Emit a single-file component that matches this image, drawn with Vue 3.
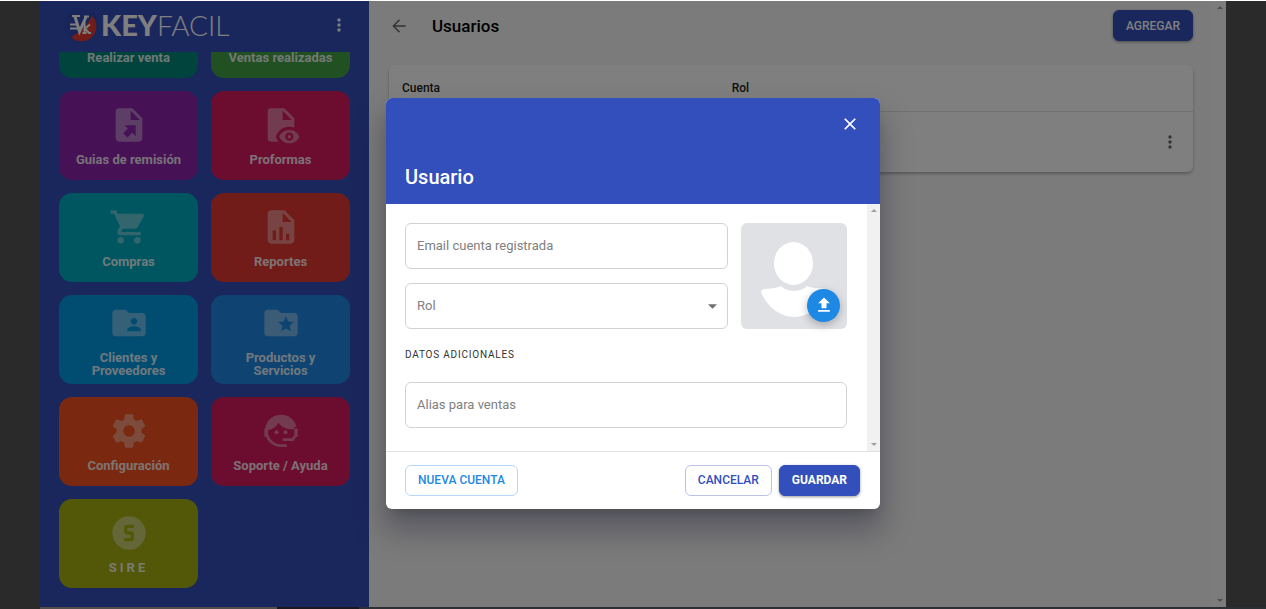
<script setup>
import { ref } from 'vue'

const tiles = [
  { label: 'Realizar venta', tone: 'teal', icon: '' },
  { label: 'Ventas realizadas', tone: 'green', icon: '' },
  { label: 'Guias de remisión', tone: 'purple', icon: 'M14 2H6c-1.1 0-2 .9-2 2v16c0 1.1.9 2 2 2h12c1.1 0 2-.9 2-2V8l-6-6zM13 3.500 18.500 9H13V3.500zM9.300 12.100H16v6.700l-2.100-2.100-2.800 2.800-2.600-2.600 2.800-2.800z' },
  { label: 'Proformas', tone: 'pink', icon: 'M17 18c.56 0 1 .44 1 1s-.44 1-1 1-1-.44-1-1 .44-1 1-1m0-3c-2.730 0-5.060 1.660-6 4 .94 2.340 3.270 4 6 4s5.060-1.660 6-4c-.94-2.340-3.270-4-6-4m0 6.500a2.500 2.500 0 0 1-2.500-2.500 2.500 2.500 0 0 1 2.500-2.500 2.500 2.500 0 0 1 2.500 2.500 2.500 2.500 0 0 1-2.500 2.500M9.270 20c-.13-.320-.250-.660-.350-1 .1-.340.220-.680.350-1 1.180-2.970 4.270-5 7.730-5 1.060 0 2.070.180 3 .500V8l-6-6H6a2 2 0 0 0-2 2v16a2 2 0 0 0 2 2h4.500a8.150 8.150 0 0 1-1.230-2M13 3.500 18.500 9H13V3.500z' },
  { label: 'Compras', tone: 'cyan', icon: 'M17 18a2 2 0 0 1 2 2 2 2 0 0 1-2 2 2 2 0 0 1-2-2c0-1.110.890-2 2-2M1 2h3.270l.94 2H20a1 1 0 0 1 1 1c0 .170-.050.340-.120.500l-3.580 6.470c-.340.610-1 1.030-1.750 1.030H8.100l-.9 1.630-.030.120a.25.25 0 0 0 .25.250H19v2H7a2 2 0 0 1-2-2c0-.350.090-.680.240-.960l1.360-2.450L3 4H1V2m6 16a2 2 0 0 1 2 2 2 2 0 0 1-2 2 2 2 0 0 1-2-2c0-1.110.890-2 2-2z' },
  { label: 'Reportes', tone: 'red', icon: 'M14 2H6c-1.1 0-2 .9-2 2v16c0 1.1.9 2 2 2h12c1.1 0 2-.9 2-2V8l-6-6zM13 3.500 18.500 9H13zM7 14h2v6H7zM11 12h2v8h-2zM15 16h2v4h-2z' },
  { label: 'Clientes y Proveedores', tone: 'sky', icon: 'M20 6h-8l-2-2H4c-1.1 0-2 .9-2 2v12c0 1.1.9 2 2 2h16c1.1 0 2-.9 2-2V8c0-1.1-.9-2-2-2zm-5 3c1.1 0 2 .9 2 2s-.9 2-2 2-2-.9-2-2 .9-2 2-2zm4 8h-8v-1c0-1.330 2.670-2 4-2s4 .67 4 2v1z' },
  { label: 'Productos y Servicios', tone: 'blue', icon: 'M20 6h-8l-2-2H4c-1.1 0-2 .9-2 2v12c0 1.1.9 2 2 2h16c1.1 0 2-.9 2-2V8c0-1.1-.9-2-2-2zm-2.060 11L15 15.280 12.060 17l.78-3.330-2.590-2.240 3.410-.290L15 8l1.340 3.140 3.410.290-2.590 2.240.78 3.330z' },
  { label: 'Configuración', tone: 'orange', icon: 'M12 15.500A3.500 3.500 0 0 1 8.500 12 3.500 3.500 0 0 1 12 8.500a3.500 3.500 0 0 1 3.500 3.500 3.500 3.500 0 0 1-3.500 3.500m7.430-2.530c.040-.320.070-.640.070-.970s-.030-.660-.070-1l2.110-1.630c.190-.150.240-.420.120-.640l-2-3.460c-.120-.220-.390-.310-.610-.220l-2.490 1c-.520-.390-1.060-.730-1.690-.980l-.370-2.650A.506.506 0 0 0 14 2h-4c-.250 0-.460.180-.500.420l-.370 2.650c-.630.250-1.170.590-1.690.980l-2.490-1c-.220-.090-.490 0-.610.220l-2 3.460c-.130.220-.070.490.120.640L4.570 11c-.040.340-.070.670-.070 1s.030.650.070.970l-2.110 1.660c-.190.150-.250.420-.120.640l2 3.460c.120.220.390.300.610.220l2.490-1.010c.520.400 1.060.740 1.690.990l.370 2.650c.040.240.250.420.500.420h4c.250 0 .460-.180.500-.420l.370-2.650c.630-.260 1.170-.590 1.690-.990l2.490 1.010c.220.080.490 0 .610-.220l2-3.460c.120-.220.070-.490-.120-.640z' },
  { label: 'Soporte / Ayuda', tone: 'pink', face: true },
  { label: 'SIRE', tone: 'olive', spaced: true, icon: 'M12 2a10 10 0 1 0 0 20 10 10 0 0 0 0-20zM11 7a2 2 0 0 0-2 2v2a2 2 0 0 0 2 2h2v2H9v2h4a2 2 0 0 0 2-2v-2a2 2 0 0 0-2-2h-2V9h4V7h-4z' },
]

const email = ref('')
const role = ref('')
const alias = ref('')
</script>

<template>
  <div class="page">
    <div class="shell">
      <aside class="sidebar">
        <header class="brand">
          <svg class="emblem" viewBox="0 0 36 36" aria-hidden="true">
            <circle cx="17" cy="18" r="17" fill="#314bb2" />
            <path d="M28 9A14.500 14.500 0 0 1 7 30C16 25 24 18 28 9Z" fill="#e53a2e" />
            <g fill="none" stroke="#fff">
              <path d="M8 9h8M20 9.500h5M6 17.500h7M6 21.500h8" stroke-width="2" />
              <path d="M11 9.500l4.500 15L22 10" stroke-width="3" />
              <path d="M20.500 15v11M18.500 26h4M26 17.500l-5 4 4 4.500h2" stroke-width="2" />
            </g>
          </svg>
          <h1 class="wordmark"><b>KEY</b><span>FACIL</span></h1>
          <button class="icon-btn light" type="button" aria-label="Menú">
            <svg viewBox="0 0 24 24"><path d="M12 16a2 2 0 1 1 0 4 2 2 0 0 1 0-4m0-6a2 2 0 1 1 0 4 2 2 0 0 1 0-4m0-6a2 2 0 1 1 0 4 2 2 0 0 1 0-4z" /></svg>
          </button>
        </header>
        <nav class="tiles">
          <a v-for="t in tiles" :key="t.label" href="#" class="tile" :class="[t.tone, { spaced: t.spaced }]">
            <svg v-if="t.face" class="tile-icon" viewBox="0 0 24 24" aria-hidden="true">
              <path d="M20.500 9.500A8.800 8.800 0 0 0 3.500 9.500V14A8.800 8.800 0 0 0 12 20.800h3.500" fill="none" stroke="currentColor" stroke-width="1.600" />
              <path d="M4 11.500C4 6 8 3.600 12 3.600S20 6 20 11c-4 .2-7.500-1-9.500-4-1.300 2.500-3.500 4-6.500 4.500zM2 10.500h2v5H2zM20 10.500h2v5h-2zM20 14.500h1.600L19.500 18H13v-1.600h5.500z" />
              <circle cx="9.300" cy="12.700" r="1.200" /><circle cx="14.700" cy="12.700" r="1.200" />
            </svg>
            <svg v-else class="tile-icon" viewBox="0 0 24 24" aria-hidden="true"><path fill-rule="evenodd" :d="t.icon" /></svg>
            <span>{{ t.label }}</span>
          </a>
        </nav>
      </aside>

      <main class="main">
        <div class="content">
          <header class="topbar">
            <button class="icon-btn" type="button" aria-label="Volver">
              <svg viewBox="0 0 24 24"><path d="M20 11.200v1.600H7.200l5.900 5.900L12 20l-8-8 8-8 1.100 1.300-5.900 5.900z" /></svg>
            </button>
            <h2>Usuarios</h2>
            <button class="btn filled" type="button">AGREGAR</button>
          </header>
          <table class="users">
            <thead>
              <tr><th class="account">Cuenta</th><th>Rol</th><th class="actions"></th></tr>
            </thead>
            <tbody>
              <tr>
                <td></td><td></td>
                <td class="actions">
                  <button class="icon-btn" type="button" aria-label="Opciones">
                    <svg viewBox="0 0 24 24"><path d="M12 16a2 2 0 1 1 0 4 2 2 0 0 1 0-4m0-6a2 2 0 1 1 0 4 2 2 0 0 1 0-4m0-6a2 2 0 1 1 0 4 2 2 0 0 1 0-4z" /></svg>
                  </button>
                </td>
              </tr>
            </tbody>
          </table>
        </div>
        <div class="rail" aria-hidden="true"><i class="up"></i><i class="down"></i></div>
      </main>
    </div>
    <div class="strip"><i></i><i></i><i></i></div>

    <div class="overlay">
      <form class="dialog" role="dialog" aria-labelledby="dialog-title" @submit.prevent>
        <header class="dialog-head">
          <button class="close" type="button" aria-label="Cerrar">
            <svg viewBox="0 0 24 24"><path d="M19 6.410 17.590 5 12 10.590 6.410 5 5 6.410 10.590 12 5 17.590 6.410 19 12 13.410 17.590 19 19 17.590 13.410 12z" /></svg>
          </button>
          <h2 id="dialog-title">Usuario</h2>
        </header>
        <div class="dialog-body">
          <div class="fields">
            <div class="account-row">
              <div class="stack">
                <input v-model="email" class="control" type="email" placeholder="Email cuenta registrada" aria-label="Email cuenta registrada">
                <div class="select-wrap">
                  <select v-model="role" class="control" aria-label="Rol">
                    <option value="">Rol</option>
                  </select>
                  <svg class="caret" viewBox="0 0 10 5" aria-hidden="true"><path d="M0 0h10L5 5z" /></svg>
                </div>
              </div>
              <div class="avatar">
                <svg class="person" viewBox="0 0 106 106" aria-hidden="true">
                  <ellipse cx="52.500" cy="40.500" rx="19.500" ry="21.500" />
                  <path d="M40 63C45 69 60 70 66 63C74 67 86 63 86 69C80 84 67 94 53 94S26 84 20 69C20 64 32 67 40 63Z" />
                </svg>
                <button class="upload" type="button" aria-label="Subir foto">
                  <svg viewBox="0 0 24 24"><path d="M9 16h6v-6h4l-7-7-7 7h4zM5 18h14v2H5z" /></svg>
                </button>
              </div>
            </div>
            <h3>DATOS ADICIONALES</h3>
            <input v-model="alias" class="control" type="text" placeholder="Alias para ventas" aria-label="Alias para ventas">
          </div>
          <div class="rail pale" aria-hidden="true"><i class="up"></i><i class="down"></i></div>
        </div>
        <footer class="dialog-foot">
          <button class="btn info" type="button">NUEVA CUENTA</button>
          <span class="spacer"></span>
          <button class="btn outlined" type="button">CANCELAR</button>
          <button class="btn filled strong" type="submit">GUARDAR</button>
        </footer>
      </form>
    </div>
  </div>
</template>

<style>
body { margin: 0; background: #fff; }
</style>

<style scoped>
* { box-sizing: border-box; }
.page {
  position: relative;
  display: flex;
  flex-direction: column;
  height: 100vh;
  border-top: 1px solid #fff;
  overflow: hidden;
  background: #545454;
  font-family: Roboto, "Liberation Sans", sans-serif;
  color: #000;
}
h1, h2, h3 { margin: 0; }
button { font-family: inherit; cursor: pointer; }
svg { display: block; fill: currentColor; }
.shell { flex: 1; min-height: 0; display: flex; margin: 0 40px; background: #f6f6f6; }

.sidebar {
  width: 329px;
  flex: none;
  display: flex;
  flex-direction: column;
  background: #344fba;
  color: #fff;
}
.brand {
  height: 51px;
  flex: none;
  display: flex;
  align-items: center;
  padding: 0 20px 3px 24px;
}
.emblem { width: 36px; height: 36px; }
.wordmark { flex: 1; margin-left: 1px; font: 400 29px/36px Lato, sans-serif; }
.wordmark b { font-weight: 900; }
.wordmark span { font-size: 28px; font-weight: 300; }
.icon-btn {
  display: grid;
  place-items: center;
  width: 20px;
  height: 20px;
  padding: 0;
  border: 0;
  background: none;
  color: #666;
}
.icon-btn svg { width: 20px; height: 20px; }
.icon-btn.light { color: #fff; }
.tiles {
  flex: 1;
  min-height: 0;
  overflow: hidden;
  display: grid;
  grid-template-columns: 1fr 1fr;
  grid-auto-rows: 89px;
  gap: 13px;
  align-content: end;
  padding: 0 19px 19px;
}
.tile {
  display: flex;
  flex-direction: column;
  align-items: center;
  justify-content: center;
  gap: 8px;
  padding: 0 13px;
  border-radius: 13px;
  color: #fff;
  font-size: 13px;
  line-height: 13px;
  font-weight: 700;
  text-align: center;
  text-decoration: none;
}
.tile-icon { width: 40px; height: 40px; opacity: .4; flex: none; }
.tile span { color: #ffffffe0; }
.spaced { letter-spacing: 3px; }
.teal { background: #00897b; }
.green { background: #43a047; }
.purple { background: #8e24aa; }
.pink { background: #d81b60; }
.cyan { background: #00acc1; }
.red { background: #e53935; }
.sky { background: #039be5; }
.blue { background: #1e88e5; }
.orange { background: #f4511e; }
.olive { background: #a6b012; }

.main { flex: 1; min-width: 0; display: flex; }
.content { flex: 1; min-width: 0; padding: 9px 20px 0; }
.topbar { display: flex; align-items: center; height: 31px; margin-bottom: 24px; }
.topbar h2 { flex: 1; margin-left: 23px; font-size: 17px; line-height: 24px; font-weight: 500; }
.btn {
  height: 31px;
  padding: 0 12px;
  border: 1px solid;
  border-radius: 6px;
  background: #fff;
  font-size: 12px;
  line-height: 16px;
  font-weight: 500;
}
.filled { border-color: #334fbb; background: #334fbb; color: #fff; box-shadow: 0 1px 3px #0006; }
.strong { font-weight: 700; }
.outlined { border-color: #b9c2e8; color: #334fbb; }
.info { border-color: #b3d8f8; color: #1e88e5; }
.users {
  width: 100%;
  table-layout: fixed;
  border-spacing: 0;
  border-radius: 6px;
  background: #fff;
  box-shadow: 0 2px 3px #0004;
}
.users th {
  height: 47px;
  padding: 0 13px;
  border-bottom: 1px solid #e0e0e0;
  font-size: 12px;
  line-height: 16px;
  font-weight: 500;
  text-align: left;
  color: #222;
}
.users td { height: 60px; padding: 0 13px; }
.users .account { width: 41%; }
.users .actions { width: 46px; }
.rail {
  width: 13px;
  flex: none;
  display: flex;
  flex-direction: column;
  align-items: center;
  justify-content: space-between;
  padding: 5px 0;
  background: #f8f8f8;
  color: #a0a0a0;
}
.rail i { border: 3px solid transparent; }
.rail .up { border-top: 0; border-bottom-color: currentColor; }
.rail .down { border-bottom: 0; border-top-color: currentColor; }
.strip { flex: none; display: flex; height: 2px; background: #546068; }
.strip i:nth-child(1) { width: 40px; background: #555; }
.strip i:nth-child(2) { width: 237px; background: #a09a98; }
.strip i:nth-child(3) { width: 82px; background: #303040; }

.overlay {
  position: absolute;
  inset: 0;
  display: grid;
  place-items: center;
  padding-bottom: 4px;
  background: rgba(0, 0, 0, .5);
}
.dialog {
  width: 494px;
  max-width: calc(100% - 52px);
  border-radius: 6px;
  overflow: hidden;
  background: #fff;
  box-shadow: 0 9px 12px -6px #0003, 0 20px 31px 3px #0024, 0 7px 38px 6px #0020;
}
.dialog-head {
  display: flex;
  flex-direction: column;
  justify-content: space-between;
  height: 106px;
  padding: 16px 20px 14px 19px;
  background: #334fbb;
  color: #fff;
}
.dialog-head h2 { font-size: 20px; line-height: 26px; font-weight: 500; }
.close { align-self: flex-end; padding: 0; border: 0; background: none; color: #fff; }
.close svg { width: 20px; height: 20px; }
.dialog-body { display: flex; }
.fields { flex: 1; min-width: 0; padding: 19px 20px 23px 19px; }
.account-row { display: flex; gap: 13px; }
.stack { flex: 1; min-width: 0; display: grid; gap: 14px; }
.control {
  display: block;
  width: 100%;
  height: 46px;
  padding: 0 11px;
  border: 1px solid #d2d2d2;
  border-radius: 6px;
  outline: 0;
  background: #fff;
  appearance: none;
  font-family: inherit;
  font-size: 13px;
  color: #808080;
}
.control::placeholder { color: #808080; opacity: 1; }
.select-wrap { position: relative; }
.caret { position: absolute; right: 11px; top: 21px; width: 9px; height: 5px; color: #707070; }
.avatar { position: relative; width: 106px; height: 106px; border-radius: 6px; background: #dfe1e5; }
.person { width: 106px; height: 106px; color: #fff; }
.upload {
  position: absolute;
  right: 7px;
  bottom: 7px;
  display: grid;
  place-items: center;
  width: 33px;
  height: 33px;
  padding: 0;
  border: 0;
  border-radius: 50%;
  background: #1e88e5;
  color: #fff;
  box-shadow: 0 3px 8px #0004;
}
.upload svg { width: 20px; height: 20px; }
.fields h3 {
  margin: 17px 0 19px;
  font-size: 10px;
  line-height: 17px;
  font-weight: 400;
  letter-spacing: .08em;
  color: #333;
}
.pale { background: #f1f1f1; }
.dialog-foot {
  display: flex;
  align-items: center;
  gap: 7px;
  padding: 13px 20px 13px 19px;
  border-top: 1px solid #e0e0e0;
}
.spacer { flex: 1; }
</style>
